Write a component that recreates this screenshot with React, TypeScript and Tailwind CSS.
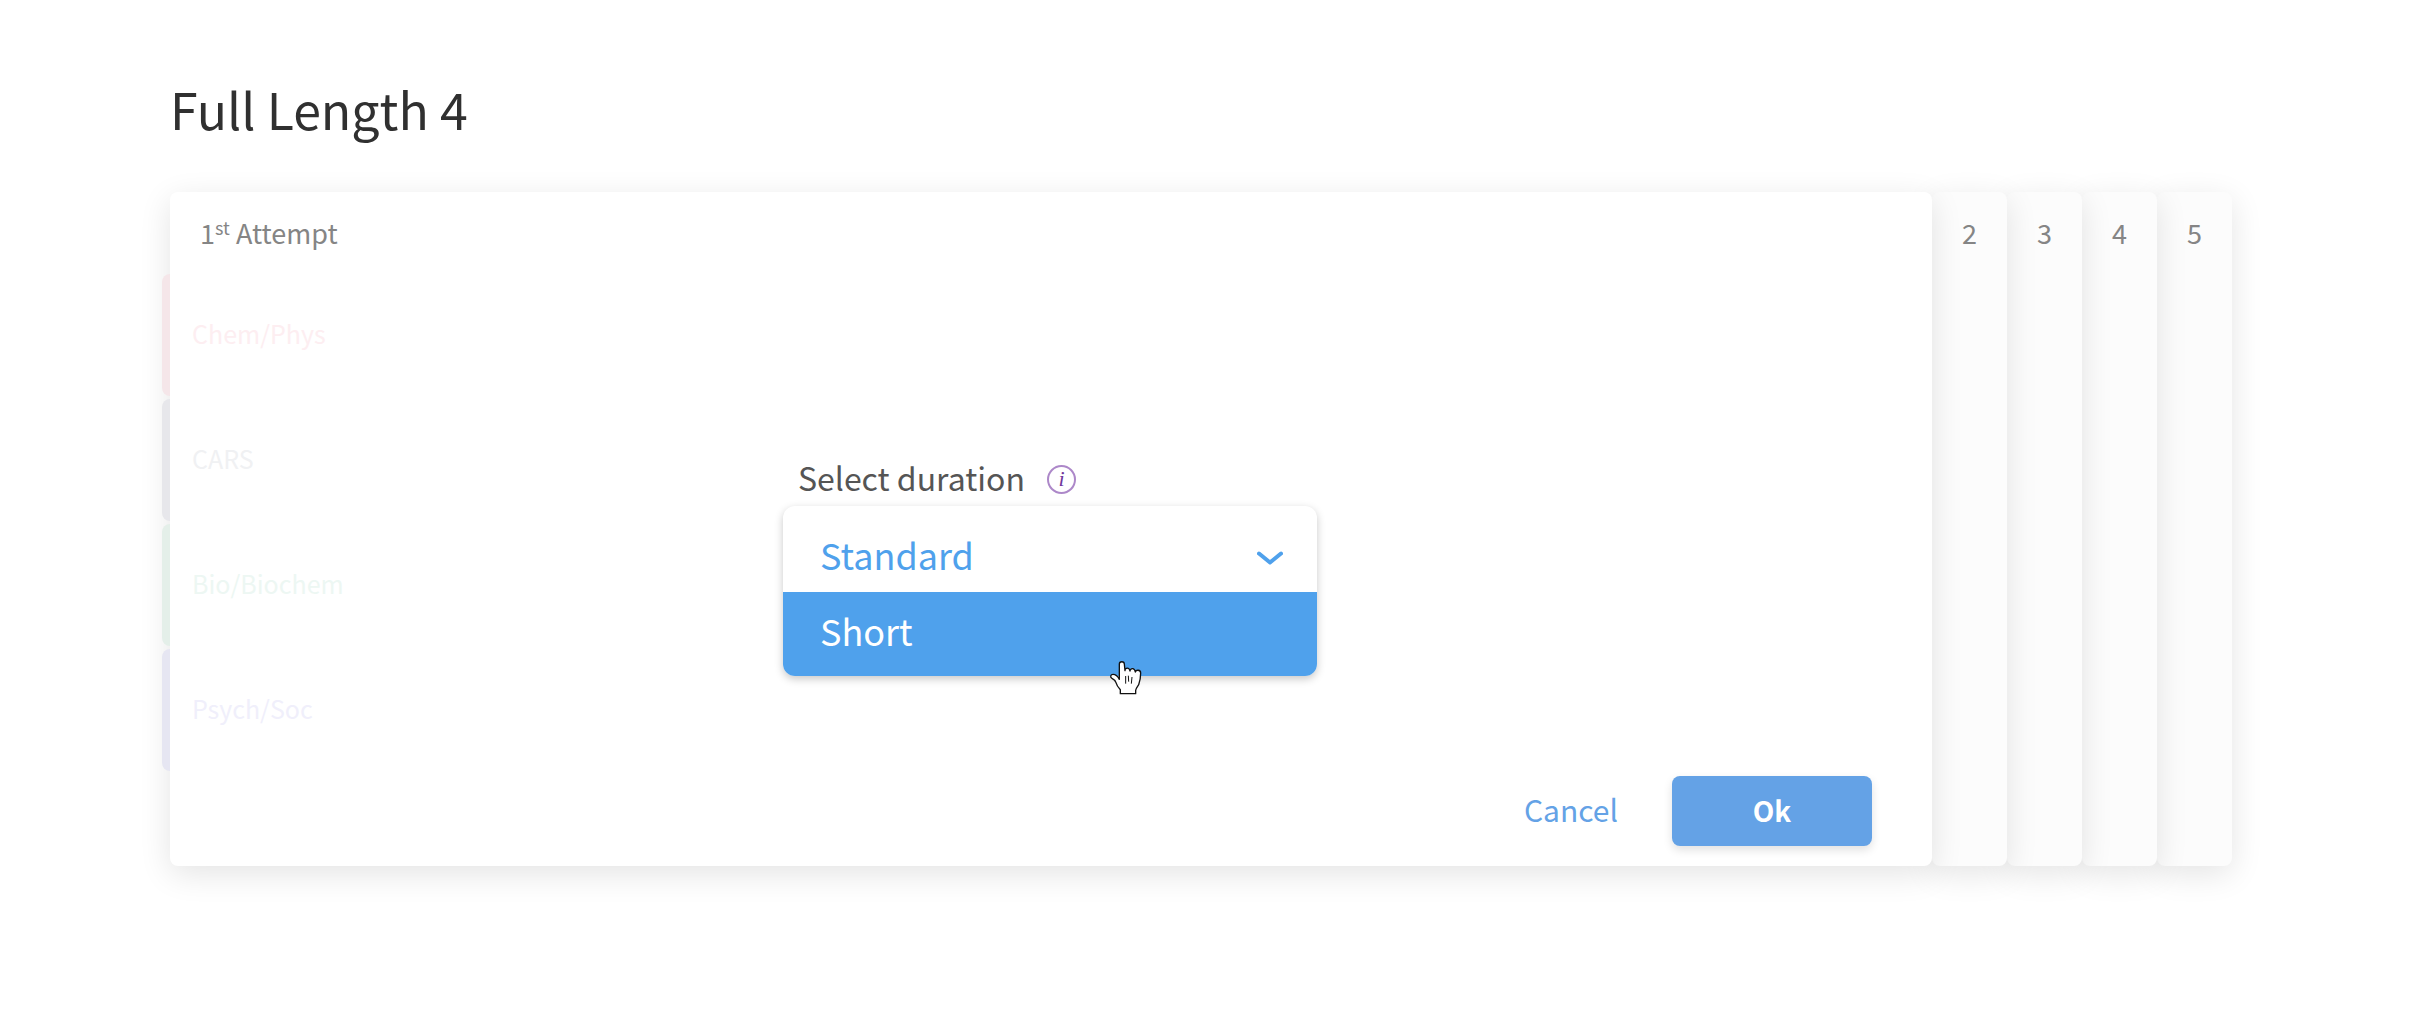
import { useState } from "react";

const sections = [
  { name: "Chem/Phys", bar: "bg-[#f5e6e9]", text: "text-[#fdeef1]" },
  { name: "CARS", bar: "bg-[#e7e7eb]", text: "text-[#f0f1f3]" },
  { name: "Bio/Biochem", bar: "bg-[#e4efe9]", text: "text-[#edf7f3]" },
  { name: "Psych/Soc", bar: "bg-[#e6e6f2]", text: "text-[#f0effb]" },
];

const attempts = [
  { label: "2", layer: "z-40" },
  { label: "3", layer: "z-30" },
  { label: "4", layer: "z-20" },
  { label: "5", layer: "z-10" },
];

function HandCursor() {
  return (
    <svg
      viewBox="207 661 99 105"
      className="pointer-events-none absolute left-[326px] top-[154px] h-[35px] w-[33px]"
      aria-hidden="true"
    >
      <path
        d="M241 762V750C235 744 230 737 228 729C226 722 222 719 216 716C209 712 212 704 219 704C227 704 234 711 238 719V673C238 664 253 664 253 673L255 693C255 683 268 683 270 694C271 684 284 684 286 697C288 689 302 690 302 700C302 712 300 724 296 735C292 741 288 746 287 752V762Z"
        fill="#fff"
        stroke="#111"
        strokeWidth="4"
        strokeLinejoin="round"
      />
      <path d="M257 709V732M265 708L266 726M276 712L274 732" stroke="#111" strokeWidth="3" fill="none" />
    </svg>
  );
}

function DurationField() {
  const [duration, setDuration] = useState("Standard");
  return (
    <div className="mr-0.5 w-[534px]">
      <div className="flex h-[50px] items-center gap-[22px] pb-1 pl-[15px]">
        <label htmlFor="duration" className="pb-1 text-[32px] leading-10 text-[#555]">
          Select duration
        </label>
        <button
          type="button"
          aria-label="About duration"
          className="flex size-[29px] items-center justify-center rounded-full border-2 border-[#ad88c9] font-['Liberation_Serif',serif] text-[22px] leading-none text-[#70389c] italic"
        >
          i
        </button>
      </div>
      <div className="relative rounded-xl bg-white shadow-[0_3px_8px_rgba(0,0,0,0.22)]">
        <div className="relative">
          <select
            id="duration"
            value={duration}
            onChange={(e) => setDuration(e.target.value)}
            className="h-[86px] w-full appearance-none rounded-t-xl bg-transparent px-[37px] pt-2.5 text-4xl text-[#4fa1ec] outline-none"
          >
            <option>Standard</option>
            <option>Short</option>
          </select>
          <svg
            viewBox="0 0 26 14"
            className="pointer-events-none absolute right-[34px] top-[45px] h-[14px] w-[26px]"
            fill="none"
            aria-hidden="true"
          >
            <path d="M2 2.5L13 11.5L24 2.5" stroke="#4fa1ec" strokeWidth="4" strokeLinecap="round" strokeLinejoin="round" />
          </svg>
        </div>
        <button
          type="button"
          onClick={() => setDuration("Short")}
          className="block h-[84px] w-full rounded-b-xl bg-[#4fa1ec] px-[37px] pb-2 text-left text-4xl text-white"
        >
          Short
        </button>
        <HandCursor />
      </div>
    </div>
  );
}

export default function App() {
  return (
    <main className="bg-white pt-[68px] pr-[186px] pb-[160px] pl-[170px] font-['Noto_Sans_CJK_SC',sans-serif]">
      <h1 className="text-[50px] leading-[80px] text-[#303030]">Full Length 4</h1>
      <div className="mt-11 flex">
        <section className="relative z-50 grid flex-1 rounded-lg bg-white shadow-[0_8px_32px_rgba(0,0,0,0.11)]">
          <div className="col-start-1 row-start-1">
            <h2 className="flex h-[82px] items-center pl-[30px] text-[27px] text-[#858585]">
              <span>
                1<sup className="text-lg leading-none">st</sup> Attempt
              </span>
            </h2>
            <ul className="-ml-2 flex flex-col gap-[3px]">
              {sections.map((s) => (
                <li key={s.name} className="flex h-[122px] items-center gap-[22px]">
                  <span className={`h-full w-2 rounded-l-lg ${s.bar}`} />
                  <span className={`pb-0.5 text-[25px] ${s.text}`}>{s.name}</span>
                </li>
              ))}
            </ul>
          </div>
          <form
            className="col-start-1 row-start-1 flex flex-col items-center pt-[264px]"
            onSubmit={(e) => e.preventDefault()}
          >
            <DurationField />
            <div className="mt-[100px] mb-5 flex items-center gap-[54px] self-end pr-[60px] text-[30px]">
              <button type="button" className="pb-1 text-[#64a2e6]">
                Cancel
              </button>
              <button
                type="submit"
                className="h-[70px] w-[200px] rounded-lg bg-[#64a2e6] pb-0.5 text-[28px] font-semibold text-white shadow-[0_4px_10px_rgba(0,0,0,0.12)]"
              >
                Ok
              </button>
            </div>
          </form>
        </section>
        {attempts.map((a) => (
          <button
            key={a.label}
            type="button"
            className={`relative flex w-[75px] justify-center rounded-lg bg-[#fcfcfc] text-[27px] leading-[82px] text-[#858585] shadow-[0_8px_32px_rgba(0,0,0,0.11)] ${a.layer}`}
          >
            {a.label}
          </button>
        ))}
      </div>
    </main>
  );
}
